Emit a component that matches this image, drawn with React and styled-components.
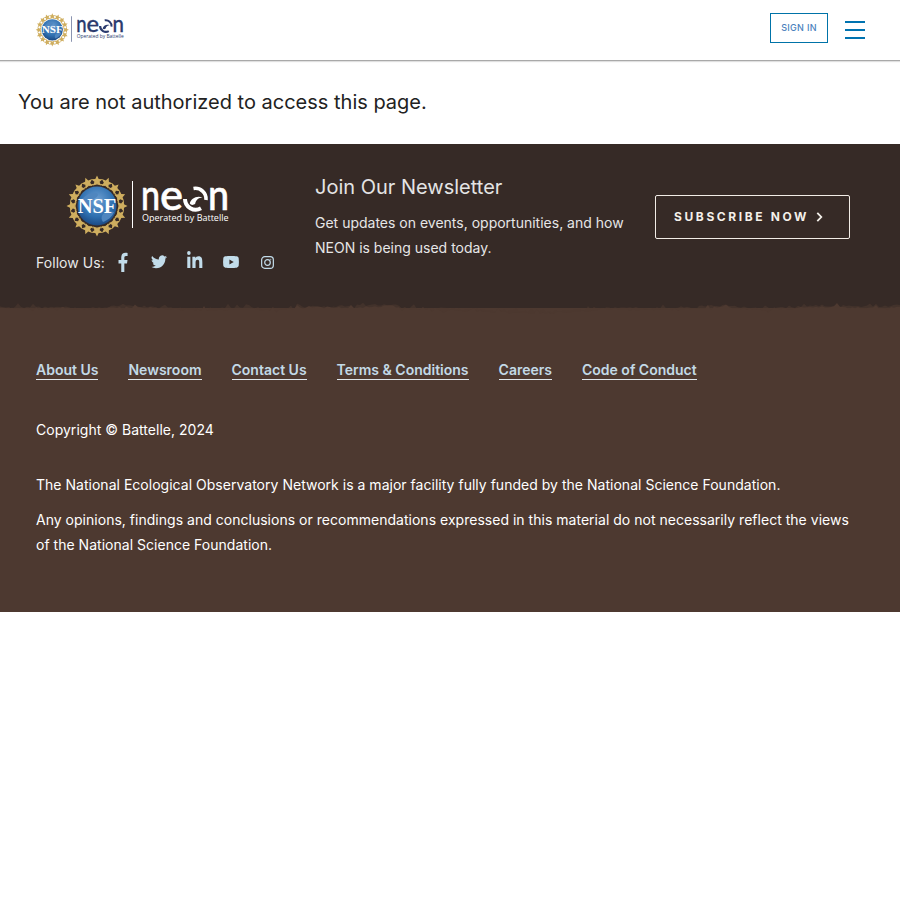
import React from "react";
import styled, { createGlobalStyle } from "styled-components";

const Global = createGlobalStyle`
  html, body { margin: 0; padding: 0; background: #fff; }
  body { font-family: Inter, "Liberation Sans", sans-serif; color: #222; }
  * { box-sizing: border-box; }
`;

const Header = styled.header`
  height: 61px;
  padding: 0 35px 0 36px;
  display: flex;
  align-items: center;
  justify-content: space-between;
  background: #fff;
  border-bottom: 1px solid #a9a9a9;
  box-shadow: 0 1px 1px rgba(0,0,0,.12);
`;
const HeaderActions = styled.div`
  display: flex;
  align-items: center;
  gap: 17px;
`;
const SignIn = styled.a`
  width: 58px;
  height: 30px;
  margin-bottom: 5px;
  display: flex;
  align-items: center;
  justify-content: center;
  border: 1px solid #0073a8;
  color: #4a7fbd;
  font-size: 9px;
  font-weight: 500;
  letter-spacing: .3px;
`;
const Burger = styled.div`
  width: 20px;
  display: flex;
  flex-direction: column;
  gap: 6px;
  & > span { display: block; height: 2px; background: #0073b0; }
`;
const Main = styled.main`
  height: 83px;
  padding: 29px 18px 0;
  font-size: 20px;
  line-height: 25px;
  color: #222;
`;
const FooterTop = styled.section`
  position: relative;
  height: 164px;
  background: #362a26;
  padding: 31px 50px 0 36px;
  display: grid;
  grid-template-columns: 279px 340px 1fr;
`;
const BrandColumn = styled.div`
  display: flex;
  flex-direction: column;
`;
const BrandLogo = styled.div`
  padding-left: 31px;
  height: 62px;
`;
const Follow = styled.div`
  margin-top: 13px;
  display: flex;
  align-items: center;
  color: #e8e8e8;
  font-size: 14px;
  letter-spacing: .05px;
  height: 24px;
`;
const FollowLabel = styled.span`
  width: 69px;
`;
const Social = styled.div`
  display: flex;
  align-items: center;
  width: 36px;
  justify-content: center;
  color: #c2dcea;
  margin-bottom: ${(p) => p.$lift || 0}px;
  & > svg { display: block; }
`;
const Newsletter = styled.div`
  color: #e6e6e6;
`;
const NewsTitle = styled.h2`
  margin: 0 0 11px;
  font-size: 20px;
  line-height: 24px;
  font-weight: 400;
  color: #e4e4e4;
`;
const NewsText = styled.p`
  margin: 0;
  font-size: 14px;
  line-height: 25px;
`;
const SubscribeWrap = styled.div`
  padding-top: 20px;
`;
const Subscribe = styled.a`
  width: 195px;
  height: 44px;
  padding: 0 0 2px 18px;
  display: flex;
  align-items: center;
  gap: 7px;
  border: 1px solid #f2ece6;
  border-radius: 2px;
  color: #f4f0ea;
  font-size: 12px;
  font-weight: 700;
  letter-spacing: 2.6px;
  & > svg { margin-top: 1px; }
`;
const Torn = styled.svg`
  position: absolute;
  left: 0;
  bottom: -6px;
  width: 900px;
  height: 14px;
  display: block;
`;
const FooterBottom = styled.section`
  height: 304px;
  background: #4d3930;
  padding: 53px 50px 0 36px;
  color: #fff;
  font-size: 14px;
  letter-spacing: .02px;
`;
const Links = styled.nav`
  display: flex;
  gap: 30px;
  letter-spacing: 0;
`;
const FootLink = styled.a`
  color: #c3d9e6;
  font-weight: 600;
  line-height: 18px;
  border-bottom: 1px solid #dfe6ea;
  height: 19px;
`;
const Copyright = styled.p`
  margin: 37px 0 0;
  line-height: 25px;
`;
const Notice = styled.p`
  margin: 30px 0 0;
  line-height: 25px;
`;
const NoticeNext = styled.p`
  margin: 10px 0 0;
  line-height: 25px;
`;

function Seal({ id }) {
  const stars = Array.from({ length: 16 }, (_, i) => i * 22.5);
  return (
    <g transform="translate(0 1)">
      <defs>
        <radialGradient id={id} cx="50%" cy="35%" r="70%">
          <stop offset="0" stopColor="#6d9fd2" />
          <stop offset=".6" stopColor="#2f70b0" />
          <stop offset="1" stopColor="#17417a" />
        </radialGradient>
      </defs>
      <circle cx="30" cy="30" r="22" fill="none" stroke="#c9a75a" strokeWidth="1.200" />
      {stars.map((a) => (
        <g key={a} transform={`rotate(${a} 30 30)`}>
          <polygon points="30,-.5 31.700,3 35.800,3.200 32.600,5.800 33.800,9.800 30,7.700 26.200,9.800 27.400,5.800 24.200,3.200 28.300,3" fill="#cfae5f" />
        </g>
      ))}
      <circle cx="30" cy="30" r="19.500" fill={`url(#${id})`} />
      <path d="M15 23c5-5 10-7 15-6 3 3-2 5-5 7-3 3-5 5-10 3zM36 38c4-3 8-3 11-2-2 5-6 8-11 10-2-3-2-5 0-8z" fill="#4f86bf" />
      <text x="30" y="36.500" textAnchor="middle" fontFamily="'Liberation Serif', serif" fontWeight="700" fontSize="20.500" fill="#fff">NSF</text>
    </g>
  );
}

function Logo({ id, width, height, color }) {
  return (
    <svg width={width} height={height} viewBox="0 0 162 62" overflow="visible">
      <Seal id={id} />
      <rect x="65" y="6" width="1" height="47" fill={color} />
      <text x="74" y="35" fontFamily="Lato, sans-serif" fontSize="42" fontWeight="500" fill={color} stroke={color} strokeWidth=".6" textLength="19" lengthAdjust="spacingAndGlyphs">n</text>
      <text x="93" y="35" fontFamily="Lato, sans-serif" fontSize="42" fontWeight="500" fill={color} stroke={color} strokeWidth=".6" textLength="23" lengthAdjust="spacingAndGlyphs">e</text>
      <g fill="none" stroke={color} strokeLinecap="butt">
        <path d="M126.500 13.500A10.700 10.700 0 0 1 139 25" strokeWidth="3.600" />
        <path d="M118 24A10.700 10.700 0 0 0 134 33.300" strokeWidth="4" />
      </g>
      <path d="M122.800 28.500C123.500 23.500 130 20 135.500 22.500C131.500 22.800 128.800 25 128.300 28.500C126.500 30.500 123.800 30.300 122.800 28.500z" fill={color} />
      <text x="141" y="35" fontFamily="Lato, sans-serif" fontSize="42" fontWeight="500" fill={color} stroke={color} strokeWidth=".6" textLength="21" lengthAdjust="spacingAndGlyphs">n</text>
      <text x="75" y="46" fontFamily="'Open Sans', sans-serif" fontSize="8.800" fontWeight="500" fill={color} textLength="86.500" lengthAdjust="spacingAndGlyphs">Operated by Battelle</text>
    </svg>
  );
}

const tornTop = [
  [0,7],[30,8],[70,8],[95,8],[130,6],[165,8],[200,9],[240,8],[270,9],[312,7],[355,6],[395,5],[402,8],[440,9],[480,10],[500,11],[520,12],[545,12],[575,11],[610,8],[655,9],[695,7],[728,6],[755,9],[790,8],[810,6],[840,6],[872,7],[900,6],
];
function tornEdge(seed, shift) {
  let s = seed;
  const rand = () => { s = (s * 1103 + 12345) % 65536; return s / 65536; };
  const pts = [];
  let seg = 0;
  for (let x = 0; x <= 900; x += 3) {
    while (seg < tornTop.length - 2 && x > tornTop[seg + 1][0]) seg++;
    const [x0, y0] = tornTop[seg];
    const [x1, y1] = tornTop[seg + 1];
    const base = y0 + ((y1 - y0) * (x - x0)) / (x1 - x0);
    const r = rand();
    const spike = r > .92 ? -3 : r < .06 ? 2 : 0;
    pts.push(`${x},${(base + shift + (rand() - .5) * 2.200 + spike).toFixed(1)}`);
  }
  return pts.join(" ") + " 900,14 0,14";
}
const edgeSoft = tornEdge(77, -.5);
const edgeSolid = tornEdge(4242, 1);

const icons = [
  { name: "facebook", lift: 1, icon: (
    <svg width="10" height="20" viewBox="0 0 12 22" preserveAspectRatio="none"><path fill="currentColor" d="M7.600 22V12.600h3.200l.6-3.800H7.600V6.400c0-1.100.5-2 2-2h1.900V1C10.900.9 9.900.8 8.900.8 6 .8 3.900 2.600 3.900 5.900v2.900H.6v3.800h3.300V22z" /></svg>
  ) },
  { name: "twitter", lift: 1, icon: (
    <svg width="16" height="14" viewBox="0 0 24 20"><path fill="currentColor" d="M24 2.400c-.9.400-1.800.7-2.800.8 1-.6 1.800-1.600 2.200-2.700-1 .6-2 1-3.100 1.200A4.900 4.900 0 0 0 11.900 6.100 14 14 0 0 1 1.700.9a4.900 4.900 0 0 0 1.500 6.600c-.8 0-1.600-.2-2.200-.6v.1c0 2.400 1.700 4.400 3.900 4.800-.7.200-1.500.2-2.200.1.600 2 2.400 3.400 4.600 3.400A9.900 9.900 0 0 1 0 17.300 14 14 0 0 0 7.500 19.500c9.100 0 14-7.500 14-14v-.6c1-.7 1.800-1.600 2.500-2.500z" /></svg>
  ) },
  { name: "linkedin", lift: 5, icon: (
    <svg width="16" height="17" viewBox="0 0 17 16" preserveAspectRatio="none"><path fill="currentColor" d="M.3 5.300h3.300V16H.3zM2 0a1.900 1.900 0 1 1 0 3.800A1.900 1.900 0 0 1 2 0zM5.700 5.300h3.200v1.500c.5-.9 1.600-1.800 3.300-1.800 3.500 0 4.100 2.300 4.100 5.300V16H13v-5c0-1.200 0-2.700-1.700-2.700S9.100 9.600 9.100 10.900V16H5.700z" /></svg>
  ) },
  { name: "youtube", lift: 0, icon: (
    <svg width="16" height="12" viewBox="0 0 17 13" preserveAspectRatio="none"><path fill="currentColor" fillRule="evenodd" d="M2.500.4C5.500 0 11.500 0 14.500.4c1.300.2 2 1 2.200 2.200.3 2.500.3 5.300 0 7.800-.2 1.200-.9 2-2.200 2.200-3 .4-9 .4-12 0C1.200 12.400.5 11.600.3 10.400 0 7.900 0 5.100.3 2.600.5 1.400 1.200.6 2.500.4zM6.800 3.700v5.600l4.600-2.800z" /></svg>
  ) },
  { name: "instagram", lift: 0, icon: (
    <svg width="13" height="13" viewBox="0 0 14 14" fill="none" stroke="currentColor" strokeWidth="1.300"><rect x=".7" y=".7" width="12.600" height="12.600" rx="3.400" /><circle cx="7" cy="7" r="3" /><circle cx="10.500" cy="3.500" r=".6" fill="currentColor" stroke="none" /></svg>
  ) },
];

const footerLinks = ["About Us", "Newsroom", "Contact Us", "Terms & Conditions", "Careers", "Code of Conduct"];

export default function App() {
  return (
    <>
      <Global />
      <Header>
        <Logo id="sealA" width={88} height={33.700} color="#2a3a6e" />
        <HeaderActions>
          <SignIn>SIGN IN</SignIn>
          <Burger><span /><span /><span /></Burger>
        </HeaderActions>
      </Header>
      <Main>You are not authorized to access this page.</Main>
      <footer>
        <FooterTop>
          <BrandColumn>
            <BrandLogo><Logo id="sealB" width={162} height={62} color="#fff" /></BrandLogo>
            <Follow>
              <FollowLabel>Follow Us:</FollowLabel>
              {icons.map(({ name, lift, icon }) => (
                <Social key={name} $lift={lift}>{icon}</Social>
              ))}
            </Follow>
          </BrandColumn>
          <Newsletter>
            <NewsTitle>Join Our Newsletter</NewsTitle>
            <NewsText>Get updates on events, opportunities, and how NEON is being used today.</NewsText>
          </Newsletter>
          <SubscribeWrap>
            <Subscribe>
              SUBSCRIBE NOW
              <svg width="7" height="10" viewBox="0 0 7 10" fill="none" stroke="currentColor" strokeWidth="1.800"><path d="M1.300 .8l4 4.200-4 4.200" /></svg>
            </Subscribe>
          </SubscribeWrap>
          <Torn viewBox="0 0 900 14">
            <polygon points={edgeSoft} fill="#4d3930" opacity=".55" />
            <polygon points={edgeSolid} fill="#4d3930" />
          </Torn>
        </FooterTop>
        <FooterBottom>
          <Links>
            {footerLinks.map((l) => <FootLink key={l}>{l}</FootLink>)}
          </Links>
          <Copyright>Copyright © Battelle, 2024</Copyright>
          <Notice>The National Ecological Observatory Network is a major facility fully funded by the National Science Foundation.</Notice>
          <NoticeNext>Any opinions, findings and conclusions or recommendations expressed in this material do not necessarily reflect the views of the National Science Foundation.</NoticeNext>
        </FooterBottom>
      </footer>
    </>
  );
}
